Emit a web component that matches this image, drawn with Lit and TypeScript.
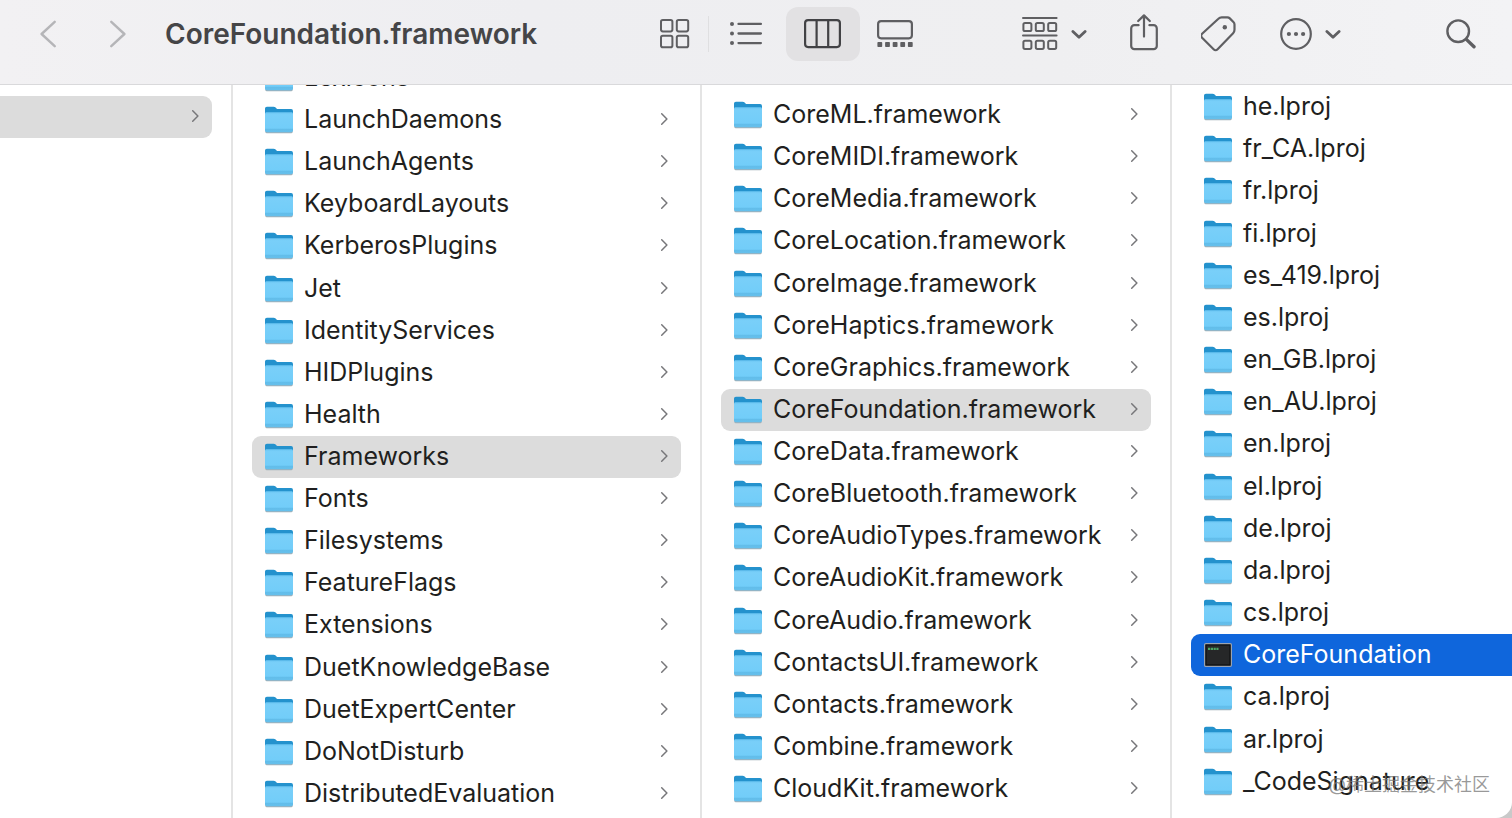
import { LitElement, html, css, svg, nothing } from "lit";
import { customElement, property, state } from "lit/decorators.js";
import { classMap } from "lit/directives/class-map.js";

interface Entry {
  name: string;
  kind: "folder" | "binary";
}

interface Column {
  id: string;
  label: string;
  selected: string;
  entries: Entry[];
}

const folders = (...names: string[]): Entry[] =>
  names.map((name) => ({ name, kind: "folder" }));

const LIBRARY = folders(
  "Lexicons",
  "LaunchDaemons",
  "LaunchAgents",
  "KeyboardLayouts",
  "KerberosPlugins",
  "Jet",
  "IdentityServices",
  "HIDPlugins",
  "Health",
  "Frameworks",
  "Fonts",
  "Filesystems",
  "FeatureFlags",
  "Extensions",
  "DuetKnowledgeBase",
  "DuetExpertCenter",
  "DoNotDisturb",
  "DistributedEvaluation",
);

const FRAMEWORKS = folders(
  "CoreML.framework",
  "CoreMIDI.framework",
  "CoreMedia.framework",
  "CoreLocation.framework",
  "CoreImage.framework",
  "CoreHaptics.framework",
  "CoreGraphics.framework",
  "CoreFoundation.framework",
  "CoreData.framework",
  "CoreBluetooth.framework",
  "CoreAudioTypes.framework",
  "CoreAudioKit.framework",
  "CoreAudio.framework",
  "ContactsUI.framework",
  "Contacts.framework",
  "Combine.framework",
  "CloudKit.framework",
);

const RESOURCES: Entry[] = [
  ...folders(
    "he.lproj",
    "fr_CA.lproj",
    "fr.lproj",
    "fi.lproj",
    "es_419.lproj",
    "es.lproj",
    "en_GB.lproj",
    "en_AU.lproj",
    "en.lproj",
    "el.lproj",
    "de.lproj",
    "da.lproj",
    "cs.lproj",
  ),
  { name: "CoreFoundation", kind: "binary" },
  ...folders("ca.lproj", "ar.lproj", "_CodeSignature"),
];

const folderIcon = html`<svg width="28" height="28" viewBox="0 0 28 28" aria-hidden="true">
  <defs>
    <linearGradient id="front" x1="0" y1="0" x2="0" y2="1">
      <stop offset="0" stop-color="#6cc6f3" />
      <stop offset="0.12" stop-color="#79cff9" />
      <stop offset="0.8" stop-color="#72cdf9" />
      <stop offset="0.85" stop-color="#62bdea" />
      <stop offset="1" stop-color="#66c0ec" />
    </linearGradient>
  </defs>
  <path d="M0.3 24.500h27.400v1.200a1.500 1.500 0 0 1-1.500 1.500H1.800a1.500 1.500 0 0 1-1.500-1.500z" fill="#9fb0b9" />
  <path d="M0 2.600A1.900 1.900 0 0 1 1.900.700h6.600c.900 0 1.500.300 2.100.900l.900.800c.500.400 1 .600 1.700.600h12.900A1.900 1.900 0 0 1 28 4.900V10H0z" fill="#2492cd" />
  <path d="M0 7.900c0-1 .600-1.600 1.600-1.600h24.800c1 0 1.600.600 1.600 1.600v16.400a1.900 1.900 0 0 1-1.900 1.900H1.900A1.900 1.900 0 0 1 0 24.300z" fill="url(#front)" />
</svg>`;

const binaryIcon = html`<svg width="28" height="28" viewBox="0 0 28 28" aria-hidden="true">
  <rect x="0.700" y="2.700" width="26.600" height="22.600" rx="1" fill="#262728" stroke="#9aa3b0" stroke-width="1.400" />
  <rect x="2" y="4" width="24" height="20" fill="none" stroke="#101112" stroke-width="1.200" />
  <path d="M4 7.800h10.500" stroke="#4ba564" stroke-width="2.200" stroke-dasharray="2.200 0.600" />
</svg>`;

const rowChevron = html`<svg class="chevron" width="8" height="14" viewBox="0 0 8 14" fill="none" stroke="currentColor" stroke-width="1.5" stroke-linecap="round" stroke-linejoin="round" aria-hidden="true">
  <path d="M1.700 1.700 6.900 7 1.700 12.300" />
</svg>`;

const menuChevron = html`<svg width="16" height="10" viewBox="0 0 16 10" fill="none" stroke="currentColor" stroke-width="2.8" stroke-linecap="round" stroke-linejoin="round" aria-hidden="true">
  <path d="M1.9 2.500 8 8.300 14.1 2.500" />
</svg>`;

const icons = {
  back: html`<svg width="16" height="28" viewBox="0 0 16 28" fill="none" stroke="currentColor" stroke-width="2.4" stroke-linecap="round" stroke-linejoin="round" aria-hidden="true"><path d="M14.7 1.8 1.6 14l13.1 12.2" /></svg>`,
  forward: html`<svg width="16" height="28" viewBox="0 0 16 28" fill="none" stroke="currentColor" stroke-width="2.4" stroke-linecap="round" stroke-linejoin="round" aria-hidden="true"><path d="M1.3 1.8 14.4 14 1.3 26.2" /></svg>`,
  grid: html`<svg width="30" height="30" viewBox="0 0 30 30" fill="none" stroke="currentColor" stroke-width="2" aria-hidden="true">
    ${[1, 16.800].map((y) => [1, 16.800].map((x) => svg`<rect x=${x} y=${y} width="11.4" height="11.4" rx="1.8" />`))}
  </svg>`,
  list: html`<svg width="36" height="26" viewBox="1 0 36 26" fill="none" stroke="currentColor" stroke-width="2.3" stroke-linecap="round" aria-hidden="true">
    <path d="M9.500 2.900h22.4M9.500 12.500h22.4M9.500 22.100h22.4" />
    <g fill="currentColor" stroke="none"><circle cx="3" cy="2.900" r="2" /><circle cx="3" cy="12.500" r="2" /><circle cx="3" cy="22.100" r="2" /></g>
  </svg>`,
  columns: html`<svg width="38" height="30" viewBox="0 0 38 30" fill="none" stroke="currentColor" stroke-width="2.200" aria-hidden="true">
    <rect x="1.1" y="1.100" width="34.800" height="27" rx="3" /><path d="M12.600 1.500v26.500M24.200 1.500v26.500" />
  </svg>`,
  gallery: html`<svg width="36" height="28" viewBox="0 0 36 28" fill="none" stroke="currentColor" stroke-width="2.2" aria-hidden="true">
    <rect x="1.1" y="1.1" width="33.8" height="17.2" rx="3" />
    <g fill="currentColor" stroke="none">${[0.4, 8.1, 15.7, 23.3, 30.9].map((x) => svg`<rect x=${x} y="22" width="4.8" height="5" rx="0.8" />`)}</g>
  </svg>`,
  group: html`<svg width="36" height="36" viewBox="0 0 36 36" fill="none" stroke="currentColor" stroke-width="2" aria-hidden="true">
    <path d="M1 2h33.6M1 19.6h33.6" stroke-linecap="round" />
    ${[6.9, 24.7].map((y) => [1.4, 13.8, 26.2].map((x) => svg`<rect x=${x} y=${y} width="8" height="8.2" rx="1.6" />`))}
  </svg>`,
  share: html`<svg width="28" height="40" viewBox="0 0 28 40" fill="none" stroke="currentColor" stroke-width="2.2" stroke-linecap="round" stroke-linejoin="round" aria-hidden="true">
    <path d="M8.6 11.2H4.4a3.2 3.2 0 0 0-3.2 3.2V32a3.2 3.2 0 0 0 3.2 3.2h19.2a3.2 3.2 0 0 0 3.2-3.2V14.4a3.2 3.2 0 0 0-3.2-3.2h-4.2M14 22.6V1.6M8.2 7 14 1.4 19.8 7" />
  </svg>`,
  tag: html`<svg width="36" height="36" viewBox="1 0 36 36" fill="none" stroke="currentColor" stroke-width="2.2" stroke-linejoin="round" aria-hidden="true">
    <path d="M18.4 2.8c1-1 1.9-1.4 3.3-1.4h5.6c1 0 1.8.3 2.5 1l3.6 3.6c.8.8 1.1 1.6 1.1 2.6v5.200c0 1.500-.4 2.400-1.400 3.400L17.600 33.300c-1.300 1.300-2.700 1.300-4 0L2.100 21.800c-1.300-1.300-1.300-2.700 0-4z" />
    <circle cx="24.8" cy="11.200" r="2.200" fill="currentColor" stroke="none" />
  </svg>`,
  more: html`<svg width="32" height="32" viewBox="0 0 32 32" aria-hidden="true">
    <circle cx="16" cy="16" r="14.800" fill="none" stroke="currentColor" stroke-width="2.200" />
    <g fill="currentColor"><circle cx="8.900" cy="16" r="2.100" /><circle cx="16" cy="16" r="2.100" /><circle cx="23.100" cy="16" r="2.100" /></g>
  </svg>`,
  search: html`<svg width="30" height="30" viewBox="0 0 30 30" fill="none" stroke="currentColor" stroke-linecap="round" aria-hidden="true">
    <circle cx="12.200" cy="12.200" r="10.800" stroke-width="2.400" /><path d="m20.600 20.600 7.400 7.200" stroke-width="3.400" />
  </svg>`,
};

@customElement("finder-toolbar")
export class FinderToolbar extends LitElement {
  @property() heading = "";
  @state() private view = "columns";

  static styles = css`
    :host {
      display: flex;
      align-items: center;
      box-sizing: border-box;
      height: 85px;
      padding: 0 36px 16px 40px;
      border-bottom: 1px solid #d9d9db;
      background: linear-gradient(90deg, #f2f1f3, #eeeef1 35%, #efeff1 70%, #f3f3f5);
      color: #5f5f62;
    }
    button {
      display: flex;
      align-items: center;
      justify-content: center;
      flex: none;
      padding: 0;
      border: 0;
      background: none;
      color: inherit;
      font: inherit;
    }
    svg {
      display: block;
      flex: none;
    }
    .history {
      display: flex;
      gap: 54px;
      color: #b5b5b8;
    }
    h1 {
      flex: 1;
      min-width: 0;
      margin: 0 0 0 39px;
      overflow: hidden;
      white-space: nowrap;
      text-overflow: ellipsis;
      color: #454547;
      font-size: 28px;
      line-height: 40px;
      font-weight: 600;
    }
    .views {
      display: grid;
      grid-template-columns: 67px 1px 77px 74px 70px;
      align-items: center;
      height: 54px;
      margin-right: 92px;
    }
    .views button {
      height: 54px;
      border-radius: 12px;
    }
    .views .active {
      background: #e2e1e3;
      color: #424245;
    }
    .divider {
      height: 36px;
      background: #dfdfe1;
    }
    .actions {
      display: flex;
      align-items: center;
      gap: 43px;
      margin-right: 105px;
    }
    .menu {
      gap: 13px;
    }
  `;

  private viewButton(id: string, label: string, icon: unknown) {
    return html`<button
      type="button"
      class=${classMap({ active: this.view === id })}
      aria-label=${label}
      aria-pressed=${this.view === id}
      @click=${() => (this.view = id)}
    >${icon}</button>`;
  }

  render() {
    return html`
      <nav class="history">
        <button type="button" aria-label="Back">${icons.back}</button>
        <button type="button" aria-label="Forward">${icons.forward}</button>
      </nav>
      <h1>${this.heading}</h1>
      <div class="views" role="group" aria-label="View">
        ${this.viewButton("icons", "Icons", icons.grid)}
        <span class="divider"></span>
        ${this.viewButton("list", "List", icons.list)}
        ${this.viewButton("columns", "Columns", icons.columns)}
        ${this.viewButton("gallery", "Gallery", icons.gallery)}
      </div>
      <div class="actions">
        <button type="button" class="menu" aria-label="Group">${icons.group}${menuChevron}</button>
        <button type="button" aria-label="Share">${icons.share}</button>
        <button type="button" aria-label="Tags">${icons.tag}</button>
        <button type="button" class="menu" aria-label="More">${icons.more}${menuChevron}</button>
      </div>
      <button type="button" aria-label="Search">${icons.search}</button>
    `;
  }
}

@customElement("finder-row")
export class FinderRow extends LitElement {
  @property({ attribute: false }) entry?: Entry;
  @property({ type: Boolean }) selected = false;
  @property({ type: Boolean }) primary = false;

  static styles = css`
    :host {
      display: flex;
      min-height: 0;
    }
    button {
      display: flex;
      align-items: center;
      flex: 1;
      min-width: 0;
      gap: 11px;
      padding: 0 13px;
      border: 0;
      border-radius: 9px;
      background: none;
      color: #1f1f20;
      font: inherit;
      text-align: left;
    }
    .selected {
      background: #dcdcdc;
    }
    .primary {
      background: #0f66dc;
      color: #fff;
    }
    svg {
      display: block;
      flex: none;
    }
    .name {
      flex: 1;
      min-width: 0;
      padding-bottom: 2px;
      white-space: nowrap;
    }
  `;

  render() {
    const { entry } = this;
    return html`<button
      type="button"
      class=${classMap({ selected: this.selected, primary: this.primary })}
      aria-label=${entry ? nothing : "System"}
    >
      ${entry ? (entry.kind === "folder" ? folderIcon : binaryIcon) : nothing}
      <span class="name">${entry?.name}</span>
      <slot></slot>
    </button>`;
  }
}

@customElement("app-root")
export class AppRoot extends LitElement {
  @state() private columns: Column[] = [
    { id: "library", label: "Library", selected: "Frameworks", entries: LIBRARY },
    { id: "frameworks", label: "Frameworks", selected: "CoreFoundation.framework", entries: FRAMEWORKS },
    { id: "resources", label: "CoreFoundation.framework", selected: "CoreFoundation", entries: RESOURCES },
  ];

  static styles = css`
    :host {
      position: relative;
      display: flex;
      flex-direction: column;
      height: 100vh;
      overflow: hidden;
      background: #c9c9c9;
      font-family: Inter, "Noto Sans CJK SC", sans-serif;
      font-size: 25px;
      line-height: 32px;
    }
    finder-toolbar {
      flex: none;
    }
    .browser {
      display: grid;
      grid-template-columns: 233px 469px 470px 1fr;
      flex: 1;
      min-height: 0;
      overflow: hidden;
      border-bottom-right-radius: 16px;
      background: #fff;
    }
    .column {
      display: flex;
      flex-direction: column;
      min-width: 0;
      box-sizing: border-box;
      padding: 0 19px;
      border-right: 2px solid #e4e4e4;
    }
    .column finder-row {
      flex: 1 0 42px;
    }
    .column.parent {
      padding: 11px 19px 0 0;
    }
    .column.parent finder-row {
      flex: none;
      height: 42px;
      margin-left: -9px;
    }
    .library {
      margin-top: -28px;
      padding-bottom: 3px;
    }
    .frameworks {
      padding-top: 9px;
      padding-bottom: 8px;
    }
    .resources {
      padding-top: 1px;
      padding-right: 0;
      padding-bottom: 15px;
      border-right: 0;
    }
    .resources finder-row {
      margin-right: -9px;
    }
    .chevron {
      display: block;
      flex: none;
      margin-bottom: 2px;
      color: #77777a;
    }
    .watermark {
      position: absolute;
      right: 22px;
      bottom: 20px;
      color: rgba(120, 120, 120, 0.75);
      font-size: 18px;
      line-height: 26px;
      pointer-events: none;
    }
  `;

  private renderColumn(column: Column) {
    const leaf = column.id === "resources";
    return html`<section class="column ${column.id}" aria-label=${column.label}>
      ${column.entries.map((entry) => {
        const hit = entry.name === column.selected;
        return html`<finder-row .entry=${entry} ?selected=${hit && !leaf} ?primary=${hit && leaf}>${leaf ? nothing : rowChevron}</finder-row>`;
      })}
    </section>`;
  }

  render() {
    return html`
      <finder-toolbar heading="CoreFoundation.framework"></finder-toolbar>
      <main class="browser">
        <section class="column parent" aria-label="Parent">
          <finder-row selected>${rowChevron}</finder-row>
        </section>
        ${this.columns.map((column) => this.renderColumn(column))}
      </main>
      <span class="watermark">@稀土掘金技术社区</span>
    `;
  }
}
